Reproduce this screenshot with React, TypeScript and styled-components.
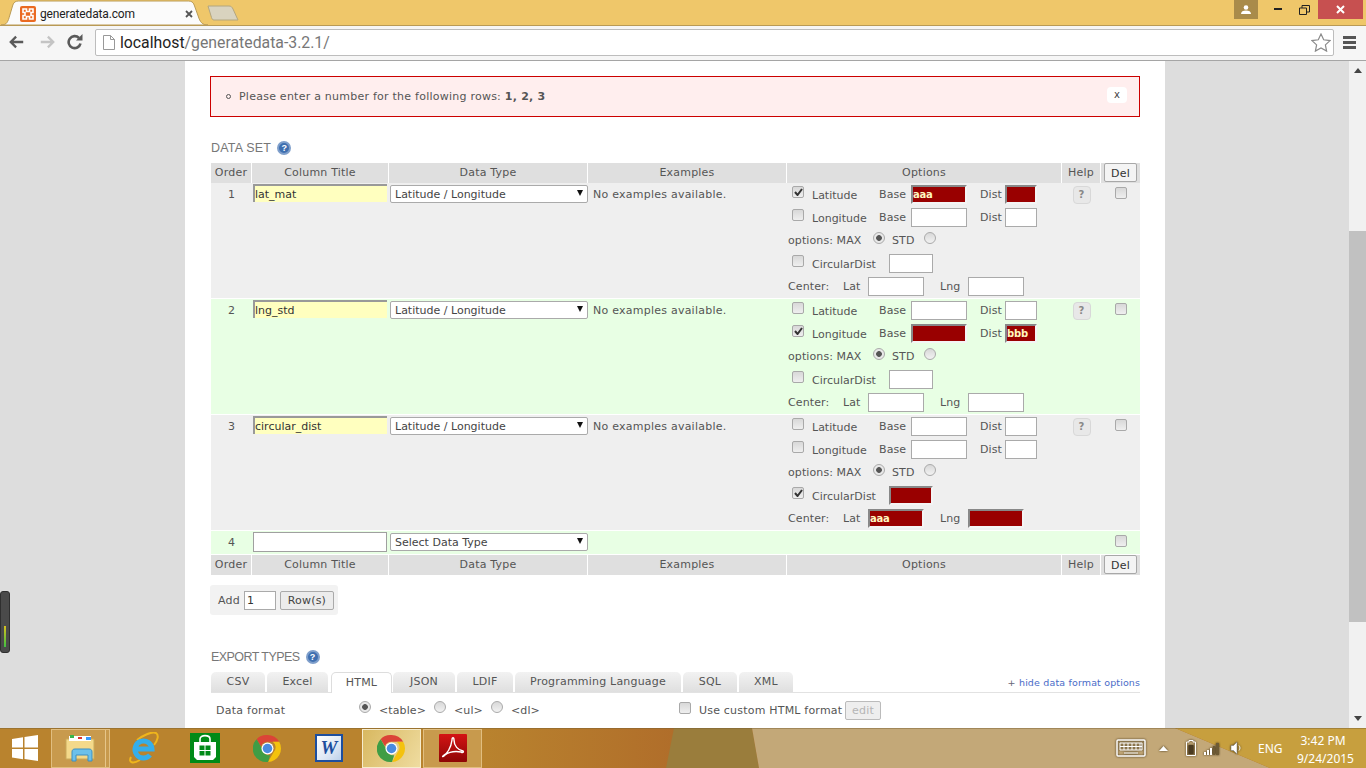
import React from "react";
import styled, { createGlobalStyle } from "styled-components";

const GlobalStyle = createGlobalStyle`
  html, body { margin: 0; padding: 0; height: 100%; overflow: hidden; }
  body { font-family: "DejaVu Sans", Verdana, sans-serif; font-size: 11px; color: #555; }
  * { box-sizing: border-box; }
`;

interface RowData {
  order: number;
  title: string;
  checked?: "lat" | "lng" | "circ";
  latBase?: string;
  lngDist?: string;
  centerLat?: string;
}

const rows: RowData[] = [
  { order: 1, title: "lat_mat", checked: "lat", latBase: "aaa" },
  { order: 2, title: "lng_std", checked: "lng", lngDist: "bbb" },
  { order: 3, title: "circular_dist", checked: "circ", centerLat: "aaa" },
];

const tabs = ["CSV", "Excel", "HTML", "JSON", "LDIF", "Programming Language", "SQL", "XML"];
const tabWidths = [54, 61, 61, 62, 56, 166, 54, 54];

export default function App() {
  return (
    <Screen>
      <GlobalStyle />
      <TabStrip>
        <ActiveTab>
          <TabShape viewBox="0 0 210 25" preserveAspectRatio="none">
            <path d="M0 25 C6 25 7 22 9 15 L12 5 C13 2 15 1 18 1 L190 1 C193 1 195 2 196 5 L200 16 C202 22 204 25 210 25 Z" fill="#fbfbfb" stroke="#b99a55" />
          </TabShape>
          <Favicon viewBox="0 0 16 16">
            <rect width="16" height="16" rx="2" fill="#ea6a22" />
            <path d="M3 3h3.500v2.500h3V3H13v3.500h-2v3h2V13H9.500v-2.500h-3V13H3V9.500h2v-3H3z" fill="none" stroke="#fff" strokeWidth="1.600" />
          </Favicon>
          <TabTitle>generatedata.com</TabTitle>
          <TabClose viewBox="0 0 8 8">
            <path d="M1 1l6 6M7 1L1 7" stroke="#555" strokeWidth="1.800" />
          </TabClose>
        </ActiveTab>
        <NewTab viewBox="0 0 32 16">
          <path d="M1 1h21c2 0 3 1 4 3l5 11H7c-1.500 0-2-1-2.500-2.500z" fill="#d9d3bf" stroke="#b3a67f" />
        </NewTab>
        <Spacer />
        <UserBadge>
          <svg width="12" height="10" viewBox="0 0 12 10">
            <circle cx="6" cy="2.500" r="2.300" fill="#fff" />
            <path d="M1 9c0-2.500 2-3.500 5-3.500s5 1 5 3.500z" fill="#fff" />
          </svg>
        </UserBadge>
        <WindowButton $w={40}>
          <svg width="9" height="3" viewBox="0 0 9 3"><rect y="0" width="8" height="2" fill="#222" /></svg>
        </WindowButton>
        <WindowButton $w={12}>
          <svg width="11" height="10" viewBox="0 0 11 10">
            <path d="M.5 3h7v6.500h-7zM3 3V.5h7.500v6.500H8" fill="none" stroke="#222" />
          </svg>
        </WindowButton>
        <CloseButton>
          <svg width="9" height="9" viewBox="0 0 9 9">
            <path d="M1 1l7 7M8 1L1 8" stroke="#fff" strokeWidth="2" />
          </svg>
        </CloseButton>
      </TabStrip>

      <Toolbar>
        <NavIcon viewBox="0 0 18 14" width="16" height="14">
          <path d="M8 1L2 7l6 6M2 7h14" fill="none" stroke="#5a5a5a" strokeWidth="2.600" />
        </NavIcon>
        <NavIcon viewBox="0 0 18 14" width="16" height="14">
          <path d="M10 1l6 6-6 6M16 7H2" fill="none" stroke="#c4c4c4" strokeWidth="2.600" />
        </NavIcon>
        <ReloadIcon viewBox="0 0 16 16" width="16" height="16">
          <path d="M13.500 9.500A6 6 0 1 1 12 4" fill="none" stroke="#5a5a5a" strokeWidth="2.600" />
          <path d="M9 6.500h6.500V0z" fill="#5a5a5a" />
        </ReloadIcon>
        <Omnibox>
          <svg width="12" height="15" viewBox="0 0 12 15">
            <path d="M.5.500h7l4 4v10H.5z" fill="#fff" stroke="#999" />
            <path d="M7.500.500v4h4" fill="none" stroke="#999" />
          </svg>
          <UrlText>
            <UrlHost>localhost</UrlHost>/generatedata-3.2.1/
          </UrlText>
          <svg width="20" height="19" viewBox="0 0 20 19">
            <path d="M10 1l2.700 5.800 6.300.800-4.600 4.300 1.200 6.200L10 15l-5.600 3.100 1.200-6.200L1 7.600l6.300-.800z" fill="#fff" stroke="#8a8a8a" strokeWidth="1.200" />
          </svg>
        </Omnibox>
        <Hamburger>
          <span />
          <span />
          <span />
        </Hamburger>
      </Toolbar>

      <Viewport>
        <Meter>
          <MeterBar />
        </Meter>
        <PageArea>
          <Page>
            <AlertBox>
              <AlertBullet />
              <AlertText>
                Please enter a number for the following rows: <strong>1, 2, 3</strong>
              </AlertText>
              <AlertClose>x</AlertClose>
            </AlertBox>

            <SectionTitle>
              DATA SET <HelpDot />
            </SectionTitle>

            <GridTable>
              <HeaderRow />
              {rows.map((r) => (
                <DataRow key={r.order} $green={r.order % 2 === 0}>
                  <OrderCell>{r.order}</OrderCell>
                  <div>
                    <TitleInput readOnly value={r.title} />
                  </div>
                  <div>
                    <FakeSelect>Latitude / Longitude<SelectArrow /></FakeSelect>
                  </div>
                  <ExamplesCell>No examples available.</ExamplesCell>
                  <OptionsCell>
                    <OptionLine>
                      <Check $on={r.checked === "lat"} $mx={4} />
                      <OptionName $w={67}>Latitude</OptionName>
                      <OptionLabel $w={32}>Base</OptionLabel>
                      <Field $w={56} $bad={r.checked === "lat"} readOnly value={r.latBase ?? ""} />
                      <OptionLabel $w={25} $ml={13}>Dist</OptionLabel>
                      <Field $w={32} $bad={r.checked === "lat"} readOnly value="" />
                    </OptionLine>
                    <OptionLine>
                      <Check $on={r.checked === "lng"} $mx={4} />
                      <OptionName $w={67}>Longitude</OptionName>
                      <OptionLabel $w={32}>Base</OptionLabel>
                      <Field $w={56} $bad={r.checked === "lng"} readOnly value="" />
                      <OptionLabel $w={25} $ml={13}>Dist</OptionLabel>
                      <Field $w={32} $bad={r.checked === "lng"} readOnly value={r.lngDist ?? ""} />
                    </OptionLine>
                    <OptionLine>
                      <OptionLabel $w={85}>options: MAX</OptionLabel>
                      <Radio $on />
                      <OptionLabel $w={32} $ml={7}>STD</OptionLabel>
                      <Radio />
                    </OptionLine>
                    <OptionLine>
                      <Check $on={r.checked === "circ"} $mx={4} />
                      <OptionName $w={77}>CircularDist</OptionName>
                      <Field $w={44} $bad={r.checked === "circ"} readOnly value="" />
                    </OptionLine>
                    <OptionLine>
                      <OptionLabel $w={55}>Center:</OptionLabel>
                      <OptionLabel $w={25}>Lat</OptionLabel>
                      <Field $w={56} $bad={r.checked === "circ"} readOnly value={r.centerLat ?? ""} />
                      <OptionLabel $w={28} $ml={16}>Lng</OptionLabel>
                      <Field $w={56} $bad={r.checked === "circ"} readOnly value="" />
                    </OptionLine>
                  </OptionsCell>
                  <HelpCell>
                    <HelpButton>?</HelpButton>
                  </HelpCell>
                  <DelCell>
                    <Check />
                  </DelCell>
                </DataRow>
              ))}
              <DataRow $green>
                <OrderCell>4</OrderCell>
                <div>
                  <EmptyTitle readOnly value="" />
                </div>
                <div>
                  <FakeSelect>Select Data Type<SelectArrow /></FakeSelect>
                </div>
                <div />
                <div />
                <div />
                <DelCell>
                  <Check />
                </DelCell>
              </DataRow>
              <HeaderRow />
            </GridTable>

            <AddBar>
              Add <AddInput readOnly value="1" />
              <PlainButton>Row(s)</PlainButton>
            </AddBar>

            <ExportTitle>
              EXPORT TYPES <HelpDot />
            </ExportTitle>

            <TabBar>
              {tabs.map((t, i) => (
                <ExportTab key={t} $active={t === "HTML"} style={{ width: tabWidths[i] }}>
                  {t}
                </ExportTab>
              ))}
              <HideLink>
                <Plus>+</Plus> hide data format options
              </HideLink>
            </TabBar>

            <FormatRow>
              <FormatLabel>Data format</FormatLabel>
              <Radio $on />
              <FormatOption $w={54}>&lt;table&gt;</FormatOption>
              <Radio />
              <FormatOption $w={36}>&lt;ul&gt;</FormatOption>
              <Radio />
              <FormatOption $w={167}>&lt;dl&gt;</FormatOption>
              <Check $mx={0} />
              <CustomLabel>Use custom HTML format</CustomLabel>
              <EditButton>edit</EditButton>
            </FormatRow>
          </Page>
        </PageArea>
        <Scrollbar>
          <ScrollArrow viewBox="0 0 8 5"><path d="M4 0l4 5H0z" fill="#444" /></ScrollArrow>
          <ScrollTrack>
            <ScrollThumb />
          </ScrollTrack>
          <ScrollArrow viewBox="0 0 8 5"><path d="M0 0h8L4 5z" fill="#444" /></ScrollArrow>
        </Scrollbar>
      </Viewport>

      <Taskbar>
        <Wallpaper viewBox="0 0 1366 40">
          <polygon points="674,0 752,0 759,40 666,40" fill="#9a7d3c" />
          <polygon points="752,0 1175,0 1270,40 759,40" fill="#c3a878" />
          <polygon points="1175,0 1366,0 1366,40 1270,40" fill="#c79f3e" />
        </Wallpaper>
        <StartIcon viewBox="0 0 28 26">
          <path d="M1 4l11-1.700v10.200H1zM13.500 2l13.500-2v12.500H13.500zM1 14h11v10.200L1 22.500zM13.500 14H27v12l-13.500-2z" fill="#fff" />
        </StartIcon>
        <PinnedSlot $w={59} $state="stacked">
          <svg width="32" height="28" viewBox="0 0 32 28">
            <path d="M1 5h28v20H1z" fill="#f4d98a" stroke="#c9a95a" />
            <path d="M4 2h22v5H4z" fill="#fff" />
            <path d="M5 1h4v3H5z" fill="#3bb54a" />
            <path d="M13 3h4v2h-4z" fill="#d33" />
            <path d="M21 3h5v3h-5z" fill="#39f" />
            <path d="M7 27v-9c0-2 1-3 3-3h14c2 0 3 1 3 3v9h-4v-6H11v6z" fill="#6cc0ea" stroke="#3f8fc0" />
          </svg>
        </PinnedSlot>
        <PinnedSlot $w={62} $ml={2}>
          <svg width="31" height="32" viewBox="0 0 31 32">
            <path d="M3 25C0 31 5 32 12 28M9 8C14 4 24-1 28 1c3 2 2 7-2 12" fill="none" stroke="#efb51c" strokeWidth="2" />
            <path d="M7.500 17h16.500a8.500 8.500 0 1 0-2 6" fill="none" stroke="#35aeea" strokeWidth="5" />
          </svg>
        </PinnedSlot>
        <PinnedSlot $w={62}>
          <svg width="30" height="30" viewBox="0 0 30 30">
            <rect width="30" height="30" fill="#008a17" />
            <path d="M10 9V6c0-4.500 10-4.500 10 0v3" fill="none" stroke="#fff" strokeWidth="1.600" />
            <path d="M4 9h22v15l-3 3H7l-3-3z" fill="#fff" />
            <path d="M9.500 12.500h5v4.500h-5zM15.500 12.500h5v4.500h-5zM9.500 18h5v4.500h-5zM15.500 18h5v4.500h-5z" fill="#008a17" />
          </svg>
        </PinnedSlot>
        <PinnedSlot $w={62}>
          <ChromeLogo />
        </PinnedSlot>
        <PinnedSlot $w={62}>
          <WordIcon>W</WordIcon>
        </PinnedSlot>
        <PinnedSlot $w={59} $ml={2} $state="active">
          <ChromeLogo />
        </PinnedSlot>
        <PinnedSlot $w={59} $ml={2} $state="open">
          <svg width="28" height="28" viewBox="0 0 28 28">
            <defs>
              <linearGradient id="pdfRed" x1="0" y1="0" x2="0" y2="1">
                <stop offset="0" stopColor="#d41414" />
                <stop offset="1" stopColor="#8e0505" />
              </linearGradient>
            </defs>
            <rect width="28" height="28" rx="1" fill="url(#pdfRed)" />
            <path d="M4 22c4-2 8-8 9-16 0-3 2-3 2 0 0 6 4 10 9 11 1 1 0 2-2 1-6-1-12 0-16 3-2 2-3 2-2 1z" fill="none" stroke="#fff" strokeWidth="1.400" />
          </svg>
        </PinnedSlot>
        <Spacer />
        <Tray>
          <KeyboardIcon viewBox="0 0 30 18">
            <rect x="1" y="1" width="28" height="16" rx="1" fill="none" stroke="#fff" strokeWidth="1.500" />
            <path d="M4 4h22v7H4zM4 7.500h22M8 4v7M12 4v7M16 4v7M20 4v7M24 4v7M8 14h14" fill="none" stroke="#fff" />
          </KeyboardIcon>
          <svg width="9" height="5" viewBox="0 0 9 5"><path d="M4.500 0L9 5H0z" fill="#fff" /></svg>
          <svg width="10" height="16" viewBox="0 0 10 16">
            <path d="M3 .500h4v1.500h2.500v13.500H.5V2H3z" fill="none" stroke="#fff" />
            <rect x="2.500" y="5" width="5" height="9" fill="#4a3a20" />
          </svg>
          <svg width="16" height="13" viewBox="0 0 16 13">
            <path d="M0 10h2v3H0zM3 8h2v5H3zM6 6h2v7H6z" fill="#fff" />
            <path d="M9 4h2v9H9zM12 1h3v12h-3z" fill="#6d5a35" />
          </svg>
          <svg width="13" height="14" viewBox="0 0 13 14">
            <path d="M1 4.500h2.500L7 1v12L3.500 9.500H1z" fill="#fff" stroke="#777" strokeWidth=".5" />
            <path d="M9 4.500c1.300 1.500 1.300 3.500 0 5" fill="none" stroke="#fff" />
          </svg>
          <TrayText>ENG</TrayText>
          <Clock>
            <div>3:42 PM</div>
            <div>9/24/2015</div>
          </Clock>
        </Tray>
      </Taskbar>
    </Screen>
  );
}

function HeaderRow() {
  return (
    <HeadGrid>
      <HeadCell>Order</HeadCell>
      <HeadCell>Column Title</HeadCell>
      <HeadCell>Data Type</HeadCell>
      <HeadCell>Examples</HeadCell>
      <HeadCell>Options</HeadCell>
      <HeadCell>Help</HeadCell>
      <DelHead>
        <DelButton>Del</DelButton>
      </DelHead>
    </HeadGrid>
  );
}

function ChromeLogo() {
  return (
    <svg width="29" height="29" viewBox="0 0 28 28">
      <path d="M14 1a13 13 0 0 1 11.300 6.500H14a6.500 6.500 0 0 0-6.200 4.500L3.500 5A13 13 0 0 1 14 1z" fill="#db4437" />
      <path d="M25.300 7.500A13 13 0 0 1 14.500 27l5.500-9.700a6.500 6.500 0 0 0-1-9.800z" fill="#f4c20d" />
      <path d="M14.500 27A13 13 0 0 1 3.500 5l5.600 9.700a6.500 6.500 0 0 0 7.500 5.800z" fill="#3f9d45" />
      <circle cx="14" cy="14" r="5.800" fill="#fff" />
      <circle cx="14" cy="14" r="4.600" fill="#4a8be0" />
    </svg>
  );
}

const Screen = styled.div`
  width: 1366px;
  height: 768px;
  display: flex;
  flex-direction: column;
  overflow: hidden;
`;

const TabStrip = styled.div`
  height: 25px;
  flex: none;
  display: flex;
  align-items: flex-start;
  background: #efc76a;
  padding-left: 1px;
`;

const ActiveTab = styled.div`
  position: relative;
  width: 207px;
  height: 25px;
  display: flex;
  align-items: center;
  padding: 2px 15px 0 19px;
  gap: 4px;
`;

const TabShape = styled.svg`
  position: absolute;
  inset: 0;
  width: 100%;
  height: 100%;
`;

const Favicon = styled.svg`
  position: relative;
  width: 16px;
  height: 16px;
  flex: none;
`;

const TabTitle = styled.span`
  position: relative;
  flex: 1;
  font: 12px Roboto, "Open Sans", sans-serif;
  letter-spacing: -0.15px;
  color: #222;
`;

const TabClose = styled.svg`
  position: relative;
  width: 8px;
  height: 8px;
`;

const NewTab = styled.svg`
  width: 32px;
  height: 16px;
  margin-top: 5px;
  margin-left: -1px;
`;

const Spacer = styled.div`
  flex: 1;
`;

const UserBadge = styled.div`
  width: 24px;
  height: 19px;
  background: #a98b4a;
  display: flex;
  align-items: center;
  justify-content: center;
`;

const WindowButton = styled.div<{ $w: number }>`
  width: ${(p) => p.$w}px;
  height: 19px;
  display: flex;
  align-items: center;
  justify-content: center;
`;

const CloseButton = styled.div`
  width: 45px;
  height: 19px;
  margin-left: 8px;
  margin-right: 3px;
  background: #c75050;
  display: flex;
  align-items: center;
  justify-content: center;
`;

const Toolbar = styled.div`
  height: 36px;
  flex: none;
  display: flex;
  align-items: center;
  gap: 14px;
  padding: 0 7px 2px 9px;
  background: #f6f6f6;
  border-top: 1px solid #b99a55;
  border-bottom: 1px solid #a5a5a5;
`;

const NavIcon = styled.svg`
  flex: none;
`;

const ReloadIcon = styled(NavIcon)`
  margin-left: -2px;
`;

const Omnibox = styled.div`
  width: 1239px;
  height: 27px;
  margin-left: -2px;
  display: flex;
  align-items: center;
  padding: 0 2px 0 7px;
  background: #fff;
  border: 1px solid #bdbdbd;
  border-radius: 2px;
`;

const UrlText = styled.span`
  flex: 1;
  margin-left: 5px;
  font: 15.800px Roboto, "Open Sans", sans-serif;
  color: #777;
`;

const UrlHost = styled.span`
  color: #222;
`;

const Hamburger = styled.div`
  width: 13px;
  margin-left: -5px;
  display: flex;
  flex-direction: column;
  gap: 2px;
  span {
    height: 3px;
    background: #555;
  }
`;

const Viewport = styled.div`
  position: relative;
  height: 667px;
  flex: none;
  display: flex;
  background: #dddddd;
`;

const Meter = styled.div`
  position: absolute;
  left: 0;
  top: 530px;
  width: 10px;
  height: 62px;
  background: #4a4a4a;
  border-radius: 3px;
  border: 1px solid #2f2f2f;
  display: flex;
  align-items: flex-end;
  justify-content: center;
  padding-bottom: 5px;
`;

const MeterBar = styled.div`
  width: 2px;
  height: 21px;
  background: linear-gradient(#d8c020, #40c040);
`;

const PageArea = styled.div`
  flex: 1;
  min-width: 0;
  overflow: hidden;
  display: flex;
  justify-content: center;
`;

const Page = styled.div`
  width: 980px;
  flex: none;
  margin-left: 1px;
  background: #fff;
  padding: 15px 25px 0;
`;

const AlertBox = styled.div`
  height: 41px;
  display: flex;
  align-items: center;
  padding: 0 12px 0 15px;
  background: #ffeeee;
  border: 1px solid #cc0000;
  color: #555;
  strong {
    font-weight: 700;
  }
`;

const AlertBullet = styled.span`
  width: 5px;
  height: 5px;
  margin-right: 8px;
  border: 1px solid #555;
  border-radius: 50%;
`;

const AlertText = styled.span`
  letter-spacing: 0.24px;
`;

const AlertClose = styled.span`
  margin-left: auto;
  margin-top: -3px;
  width: 20px;
  height: 16px;
  background: #fff;
  border-radius: 4px;
  font-size: 10px;
  line-height: 15px;
  text-align: center;
  color: #444;
`;

const SectionTitle = styled.h2`
  height: 16px;
  margin: 23px 0 7px 1px;
  display: flex;
  align-items: center;
  gap: 6px;
  font: 400 12.500px "Liberation Sans", Arial, sans-serif;
  color: #777;
  letter-spacing: 0.2px;
`;

const ExportTitle = styled(SectionTitle)`
  margin: 34px 0 7px 1px;
  letter-spacing: -0.55px;
`;

const HelpDot = styled.span`
  width: 14px;
  height: 14px;
  border-radius: 50%;
  border: 2px solid #7f9fcb;
  background: #3f6fb0;
  color: #fff;
  font: 700 9px/10px "Liberation Sans", sans-serif;
  letter-spacing: 0;
  text-align: center;
  &::after {
    content: "?";
  }
`;

const columns = "40px 136px 198px 198px 274px 38px 39px";

const GridTable = styled.div`
  margin-left: 1px;
  display: flex;
  flex-direction: column;
`;

const HeadGrid = styled.div`
  display: grid;
  grid-template-columns: ${columns};
  column-gap: 1px;
  height: 20px;
`;

const HeadCell = styled.div`
  background: #dfdfdf;
  text-align: center;
  line-height: 19px;
  color: #555;
  letter-spacing: 0.2px;
`;

const DelHead = styled(HeadCell)`
  display: flex;
  justify-content: center;
`;

const DelButton = styled.span`
  width: 33px;
  height: 19px;
  background: #f4f4f4;
  border: 1px solid #a8a8a8;
  border-radius: 2px;
  line-height: 19px;
  color: #333;
`;

const DataRow = styled.div<{ $green?: boolean }>`
  display: grid;
  grid-template-columns: ${columns};
  column-gap: 1px;
  background: ${(p) => (p.$green ? "#e8ffe4" : "#efefef")};
  border-bottom: 1px solid #fff;
`;

const OrderCell = styled.div`
  text-align: center;
  line-height: 23px;
  padding-left: 1px;
  color: #555;
`;

const TitleInput = styled.input`
  display: block;
  width: 134px;
  height: 18px;
  margin: 1px 0 0 1px;
  padding: 1px 0 0 0;
  border: 0;
  border-top: 2px solid #999;
  border-left: 2px solid #999;
  background: #ffffbf;
  outline: none;
  font: 11px "DejaVu Sans", sans-serif;
  color: #333;
`;

const EmptyTitle = styled.input`
  display: block;
  width: 134px;
  height: 20px;
  margin: 1px 0 0 1px;
  border: 1px solid #a0a0a0;
  background: #fff;
  outline: none;
`;

const FakeSelect = styled.div`
  position: relative;
  height: 18px;
  width: 198px;
  margin: 2px 0 0 1px;
  padding-left: 4px;
  background: #fff;
  border: 1px solid #aaa;
  border-radius: 2px;
  line-height: 17px;
  color: #444;
`;

const SelectArrow = styled.span`
  position: absolute;
  right: 4px;
  top: 4px;
  width: 0;
  height: 0;
  border-left: 3.500px solid transparent;
  border-right: 3.500px solid transparent;
  border-top: 6px solid #111;
`;

const ExamplesCell = styled.div`
  padding-left: 5px;
  line-height: 23px;
  color: #555;
  letter-spacing: 0.24px;
`;

const OptionsCell = styled.div`
  padding-left: 1px;
`;

const OptionLine = styled.div`
  height: 23px;
  display: flex;
  align-items: center;
`;

const OptionName = styled.span<{ $w: number }>`
  width: ${(p) => p.$w}px;
  padding-top: 2px;
  flex: none;
  white-space: nowrap;
`;

const OptionLabel = styled.span<{ $w: number; $ml?: number }>`
  width: ${(p) => p.$w}px;
  margin-left: ${(p) => p.$ml ?? 0}px;
  flex: none;
  white-space: nowrap;
  letter-spacing: 0.1px;
`;

const Field = styled.input<{ $w: number; $bad?: boolean }>`
  width: ${(p) => p.$w}px;
  height: 19px;
  flex: none;
  padding: 0 0 0 ${(p) => (p.$bad ? "0" : "1px")};
  outline: none;
  font: ${(p) => (p.$bad ? "700 10px" : "400 11px")} "DejaVu Sans", sans-serif;
  letter-spacing: ${(p) => (p.$bad ? "-0.2px" : "0")};
  color: ${(p) => (p.$bad ? "#fff7c0" : "#333")};
  background: ${(p) => (p.$bad ? "#990000" : "#fff")};
  border: ${(p) => (p.$bad ? "0" : "1px solid #aaa")};
  ${(p) => p.$bad && "border-top: 2px solid #888; border-left: 2px solid #888; border-right: 2px solid #f4f4f4; border-bottom: 2px solid #f4f4f4;"}
`;

const CheckBox = styled.span<{ $mx: number }>`
  width: 12px;
  height: 12px;
  flex: none;
  margin: -5px 8px 0 ${(p) => p.$mx}px;
  background: linear-gradient(#d8d8d8, #efefef);
  border: 1px solid #a9a9a9;
  border-radius: 2px;
  display: flex;
  align-items: center;
  justify-content: center;
`;

function Check({ $on, $mx = 0 }: { $on?: boolean; $mx?: number }) {
  return (
    <CheckBox $mx={$mx}>
      {$on && (
        <svg width="9" height="8" viewBox="0 0 9 8">
          <path d="M1 4l2.500 3L8 1" fill="none" stroke="#333" strokeWidth="2" />
        </svg>
      )}
    </CheckBox>
  );
}

const Radio = styled.span<{ $on?: boolean }>`
  width: 12px;
  height: 12px;
  flex: none;
  margin-top: -6px;
  border-radius: 50%;
  border: 1px solid #aaa;
  background: ${(p) =>
    p.$on ? "radial-gradient(circle, #555 0 2.500px, #e8e8e8 3.200px)" : "linear-gradient(#d8d8d8, #f2f2f2)"};
`;

const HelpCell = styled.div`
  display: flex;
  justify-content: center;
  align-items: flex-start;
  padding: 3px 0 0 1px;
`;

const HelpButton = styled.span`
  width: 18px;
  height: 18px;
  background: #e8e8e8;
  border: 1px solid #d8d8d8;
  border-radius: 4px;
  font-weight: 700;
  font-size: 10px;
  line-height: 16px;
  text-align: center;
  color: #888;
`;

const DelCell = styled.div`
  display: flex;
  justify-content: center;
  padding-top: 9px;
  span {
    margin-left: 0;
    margin-right: 0;
  }
`;

const AddBar = styled.div`
  width: 128px;
  height: 30px;
  margin-top: 10px;
  display: flex;
  align-items: center;
  padding-left: 8px;
  background: #f2f2f2;
  border-radius: 3px;
  color: #555;
  letter-spacing: 0.2px;
`;

const AddInput = styled.input`
  width: 32px;
  height: 19px;
  margin-left: 4px;
  padding: 0 0 0 2px;
  border: 1px solid #aaa;
  outline: none;
  font: 11px "DejaVu Sans", sans-serif;
  color: #333;
`;

const PlainButton = styled.span`
  width: 54px;
  height: 19px;
  margin-left: 4px;
  background: #ececec;
  border: 1px solid #aaa;
  border-radius: 2px;
  line-height: 17px;
  text-align: center;
  color: #444;
`;

const TabBar = styled.div`
  height: 21px;
  display: flex;
  align-items: flex-end;
  gap: 2px;
  margin-left: 1px;
  border-bottom: 1px solid #e2e2e2;
`;

const ExportTab = styled.div<{ $active?: boolean }>`
  height: ${(p) => (p.$active ? "21px" : "20px")};
  margin-bottom: ${(p) => (p.$active ? "-1px" : "0")};
  margin-left: ${(p) => (p.$active ? "1px" : "0")};
  margin-right: ${(p) => (p.$active ? "-1px" : "0")};
  text-align: center;
  line-height: 20px;
  letter-spacing: 0.2px;
  color: #555;
  border-radius: 5px 5px 0 0;
  background: ${(p) => (p.$active ? "#fff" : "linear-gradient(#f2f2f2, #dfdfdf)")};
  border: ${(p) => (p.$active ? "1px solid #ddd" : "0")};
  border-bottom: 0;
`;

const HideLink = styled.span`
  margin-left: auto;
  align-self: center;
  font-size: 9.500px;
  color: #4a6cc8;
  letter-spacing: 0.1px;
  word-spacing: 0.3px;
`;

const Plus = styled.span`
  color: #667;
`;

const FormatRow = styled.div`
  height: 34px;
  display: flex;
  align-items: center;
  padding: 0 0 0 6px;
  color: #555;
  letter-spacing: 0.25px;
`;

const FormatLabel = styled.span`
  width: 143px;
  flex: none;
`;

const FormatOption = styled.span<{ $w: number }>`
  width: ${(p) => p.$w}px;
  flex: none;
  margin-left: 9px;
  padding-right: 1px;
  position: relative;
  left: -1px;
  letter-spacing: 0.1px;
  white-space: nowrap;
`;

const CustomLabel = styled.span`
  width: 146px;
  flex: none;
  letter-spacing: 0.2px;
`;

const EditButton = styled.span`
  width: 36px;
  height: 19px;
  background: #eee;
  border: 1px solid #bbb;
  border-radius: 2px;
  line-height: 17px;
  text-align: center;
  color: #b5b5b5;
`;

const Scrollbar = styled.div`
  width: 17px;
  flex: none;
  display: flex;
  flex-direction: column;
  align-items: center;
  padding: 7px 0;
  background: #f1f1f1;
`;

const ScrollArrow = styled.svg`
  width: 8px;
  height: 5px;
  flex: none;
`;

const ScrollTrack = styled.div`
  flex: 1;
  width: 100%;
  padding-top: 158px;
  padding-bottom: 94px;
  display: flex;
`;

const ScrollThumb = styled.div`
  flex: 1;
  background: #c1c1c1;
`;

const Taskbar = styled.div`
  position: relative;
  isolation: isolate;
  height: 40px;
  flex: none;
  display: flex;
  align-items: center;
  padding-left: 11px;
  background: linear-gradient(90deg, #b9832e 0, #b9832e 480px, #b06d2a 680px);
  &::after {
    content: "";
    position: absolute;
    left: 0;
    right: 0;
    top: 0;
    height: 1px;
    background: rgba(120, 95, 50, 0.45);
  }
`;

const Wallpaper = styled.svg`
  position: absolute;
  left: 0;
  top: 0;
  width: 1366px;
  height: 40px;
  z-index: -1;
`;

const StartIcon = styled.svg`
  width: 28px;
  height: 26px;
  flex: none;
  margin-right: 12px;
`;

const PinnedSlot = styled.div<{ $w: number; $ml?: number; $state?: "open" | "active" | "stacked" }>`
  position: relative;
  width: ${(p) => p.$w}px;
  margin-left: ${(p) => p.$ml ?? 0}px;
  height: 39px;
  flex: none;
  display: flex;
  align-items: center;
  justify-content: center;
  ${(p) => (p.$state === "open" || p.$state === "stacked") && "border: 1px solid rgba(255,235,190,.45); background: rgba(255,235,190,.22);"}
  ${(p) => p.$state === "active" && "border: 1px solid #f6eccd; background: linear-gradient(120deg, #d8b860, #efdca0);"}
  ${(p) => p.$state === "stacked" && "&::after { content: ''; position: absolute; right: 3px; top: 0; bottom: 0; width: 1px; background: rgba(255,235,190,.55); }"}
`;

const WordIcon = styled.div`
  width: 28px;
  height: 28px;
  background: linear-gradient(135deg, #fff 0, #dfe8f5 60%, #bcd0ea);
  border: 2px solid #1d4e9e;
  color: #1d4e9e;
  font: italic 700 19px/24px "Liberation Serif", serif;
  text-align: center;
`;

const Tray = styled.div`
  display: flex;
  align-items: center;
  color: #fff;
  padding-right: 17px;
  & > svg {
    filter: drop-shadow(0 0 1px #3a2c10);
  }
  & > svg:nth-child(2) {
    margin: 0 18px 0 13px;
  }
  & > svg:nth-child(3) {
    margin-right: 8px;
  }
  & > svg:nth-child(4) {
    margin-right: 10px;
  }
`;

const KeyboardIcon = styled.svg`
  width: 30px;
  height: 18px;
`;

const TrayText = styled.span`
  margin-left: 15px;
  width: 39px;
  font: 12px "Noto Sans", "Open Sans", sans-serif;
`;

const Clock = styled.div`
  width: 52px;
  margin-top: 3px;
  text-align: center;
  font: 12px/18px "Noto Sans", "Open Sans", sans-serif;
  color: #fff;
  white-space: nowrap;
`;
